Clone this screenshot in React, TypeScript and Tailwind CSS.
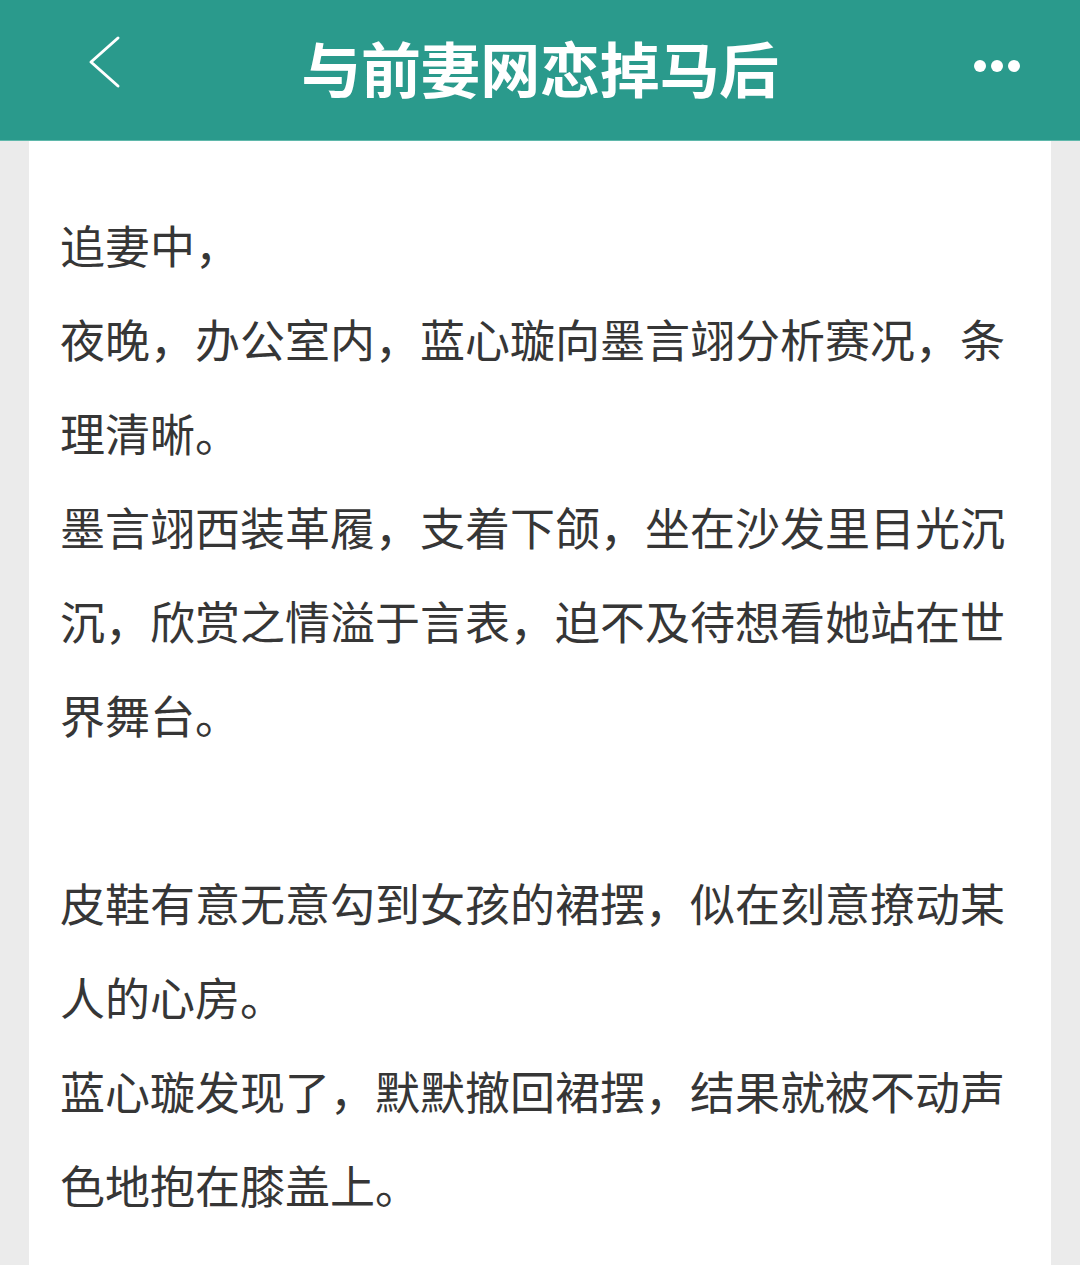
const paragraphs: string[][] = [
  ['追妻中，'],
  ['夜晚，办公室内，蓝心璇向墨言翊分析赛况，条', '理清晰。'],
  ['墨言翊西装革履，支着下颌，坐在沙发里目光沉', '沉，欣赏之情溢于言表，迫不及待想看她站在世', '界舞台。'],
  [],
  ['皮鞋有意无意勾到女孩的裙摆，似在刻意撩动某', '人的心房。'],
  ['蓝心璇发现了，默默撤回裙摆，结果就被不动声', '色地抱在膝盖上。'],
];

function BackIcon() {
  return (
    <svg width="34" height="54" viewBox="0 0 34 54" fill="none">
      <path
        d="M31 3 L4 27 L31 51"
        stroke="white"
        strokeWidth="3"
        strokeLinecap="round"
        strokeLinejoin="round"
      />
    </svg>
  );
}

function Header() {
  return (
    <header className="relative flex h-[141px] items-center justify-center bg-[#2a9a8c] border-b border-[#5fb8ab]">
      <button className="absolute left-[87px] top-[35px]">
        <BackIcon />
      </button>
      <h1 className="text-[60px] font-bold leading-none text-white tracking-[-0.3px] -mt-[6px]">
        与前妻网恋掉马后
      </h1>
      <div className="absolute right-[60px] top-[60px] flex gap-[5px]">
        <span className="h-[12px] w-[12px] rounded-full bg-white" />
        <span className="h-[12px] w-[12px] rounded-full bg-white" />
        <span className="h-[12px] w-[12px] rounded-full bg-white" />
      </div>
    </header>
  );
}

export default function App() {
  return (
    <div
      className="min-h-[1265px] bg-[#ebebeb]"
      style={{fontFamily: '"Noto Sans CJK SC", "Noto Sans", sans-serif'}}
    >
      <Header />
      <main className="mx-[29px] min-h-[1124px] bg-white pl-[31px] pt-[57px]">
        {paragraphs.map((lines, i) =>
          lines.length === 0 ? (
            <div key={i} className="h-[94px]" />
          ) : (
            <p key={i} className="text-[45px] leading-[94px] text-[#363636] whitespace-nowrap">
              {lines.map((line, j) => (
                <span key={j} className="block">
                  {line}
                </span>
              ))}
            </p>
          ),
        )}
      </main>
    </div>
  );
}
